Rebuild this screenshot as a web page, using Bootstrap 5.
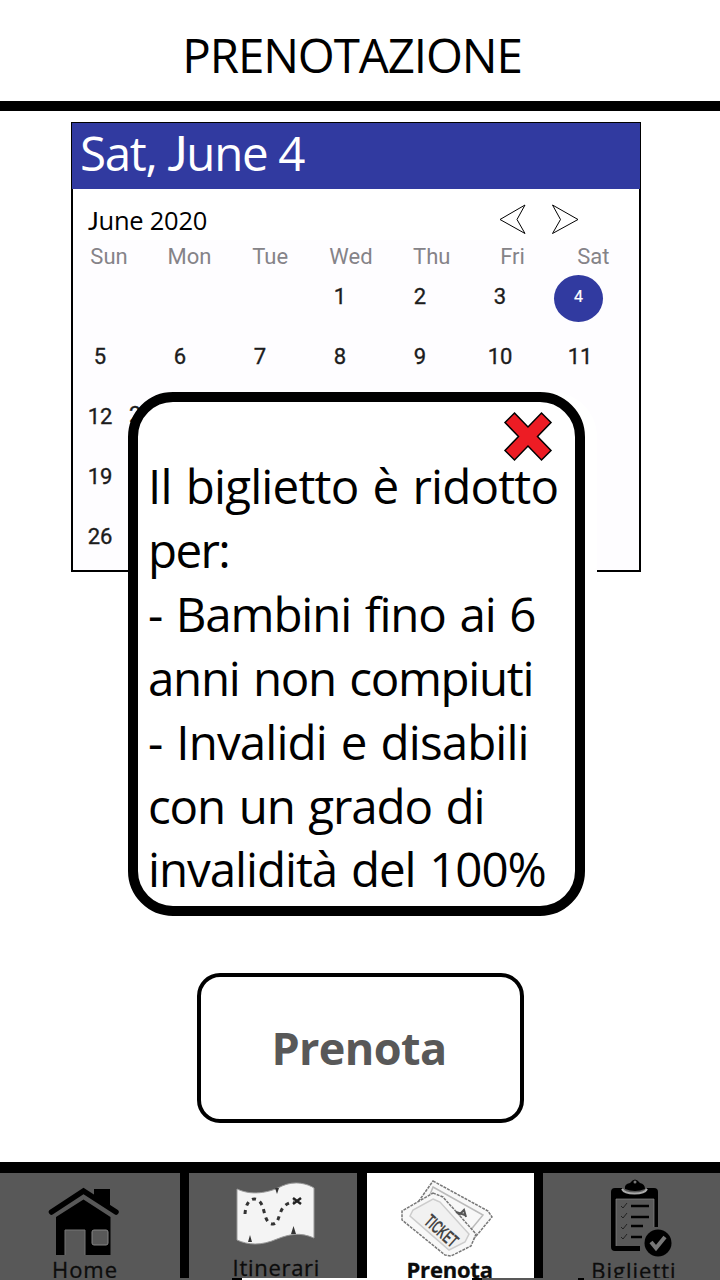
<!DOCTYPE html>
<html lang="it">
<head>
<meta charset="utf-8">
<meta name="viewport" content="width=device-width, initial-scale=1">
<title>Prenotazione</title>
<link rel="stylesheet" href="https://cdn.jsdelivr.net/npm/bootstrap@5.3.0/dist/css/bootstrap.min.css">
<style>
body{font-family:"Open Sans","Noto Sans",sans-serif;color:#000;background:#fff}
.screen{width:720px;height:1280px}
.topbar{height:111px;border-bottom:10px solid #000}
.topbar h1{font-size:47.5px;line-height:64px;letter-spacing:-1.1px;margin:23px 16px 0 0}
.calendar{width:570px;height:450px;margin:11px 0 0 71px;border:2px solid #000;border-top-width:1px;background:#fefdff}
.cal-head{height:66px;margin:0 -1px;padding-left:8px;background:#313aa0;font-size:47.5px;line-height:60px;letter-spacing:-1.3px}
.cap-j{font-family:Lato,sans-serif}
.cal-month{height:51px;padding:0 60px 0 15px;background:#fff}
.month-name{font-size:25.5px;line-height:34px;margin-top:14px;letter-spacing:-.25px}
.dow,.week{display:grid;font-family:Roboto,sans-serif;text-align:center}
.dow{grid-template-columns:76px repeat(6,80.8px);font-size:22px;line-height:33px;height:27px;color:#858388}
.dow span:first-child{width:72px}
.week{grid-template-columns:67px repeat(6,80px);height:60px;line-height:60px;font-size:22px;color:#1c1c1c;-webkit-text-stroke:.35px #1c1c1c}
.week>span:first-child{width:54px}
.today{width:49px;height:47px;border-radius:50%;background:#313aa0;color:#fff;font-size:16px;line-height:43px;margin:8px 0 0 14px;-webkit-text-stroke:.2px #fff}
.hidden-day{left:56px;top:-2px}
.notice{left:128px;top:392px;width:457px;height:524px;border:10px solid #000;border-radius:45px;background:#fff;box-shadow:12px 0 0 #fff;padding:52px 0 0 10px;font-size:47.5px;line-height:63.9px;white-space:nowrap;word-spacing:2.5px}
.notice button{right:21px;top:8px;width:52px;height:52px}
.notice span{display:block;letter-spacing:-1.15px}
.notice .l1{letter-spacing:-.8px}
.notice .l2{letter-spacing:-1.6px}
.notice .l4{letter-spacing:-1.32px}
.notice .l5{letter-spacing:-.88px}
.notice .l7{letter-spacing:-1.05px}
.book{width:327px;height:150px;margin:401px 0 0 197px;border:4px solid #000;border-radius:23px;background:#fff;color:#585858;font-size:45px;font-weight:700;line-height:1;letter-spacing:-.6px;padding:0 3px 1px 0}
.tabs{height:116px;margin-top:39px;background:#000;padding-top:11px;display:grid;grid-template-columns:180px 168px 167px 177px;column-gap:9.33px}
.tab-item{background:#585858;color:#0c0c0c;font-size:22px;line-height:24px;height:105px;overflow:hidden;text-align:center}
.tab-item.current{background:#fff;font-weight:700}
.tab-item svg{display:block;height:84px;width:100%}
.tab-item div{margin-left:-10px;letter-spacing:.9px;-webkit-text-stroke:.3px #0c0c0c}
.tab-item .t-it{margin:-2px 0 0 6px;letter-spacing:.7px}
.tab-item .t-pr{margin-left:-1px;letter-spacing:-.2px}
.tab-item .t-bi{margin:1px 0 0 5px;letter-spacing:1px}
.strip{height:2px;background:linear-gradient(90deg,#585858 232px,#000 232px 242px,#fff 242px 472px,#000 472px 482px,#585858 482px 578px,#000 578px 584px,#585858 584px)}
</style>
</head>
<body>
<main class="screen position-relative overflow-hidden d-flex flex-column">
<header class="topbar text-center flex-shrink-0"><h1 class="fw-normal">PRENOTAZIONE</h1></header>
<section class="calendar flex-shrink-0">
  <div class="cal-head text-white">Sat, <span class="cap-j">J</span>une 4</div>
  <div class="cal-month d-flex justify-content-between">
    <div class="month-name"><span class="cap-j">J</span>une 2020</div>
    <svg width="80" height="30" style="margin-top:15px" fill="#fff" stroke="#000"><path d="M1 15.500L26 1L18 15.500L26 29.500ZM53.500 1L79 15.500L53.500 29.500L61.500 15.500Z"/></svg>
  </div>
  <div class="dow"><span>Sun</span><span>Mon</span><span>Tue</span><span>Wed</span><span>Thu</span><span>Fri</span><span>Sat</span></div>
  <div class="week"><span></span><span></span><span></span><span>1</span><span>2</span><span>3</span><div class="today">4</div></div>
  <div class="week"><span>5</span><span>6</span><span>7</span><span>8</span><span>9</span><span>10</span><span>11</span></div>
  <div class="week"><span class="position-relative">12<span class="hidden-day position-absolute">2</span></span></div>
  <div class="week"><span>19</span></div>
  <div class="week"><span>26</span></div>
</section>
<button class="book flex-shrink-0">Prenota</button>
<nav class="tabs flex-shrink-0">
  <div class="tab-item"><svg viewBox="0 0 180 84"><path d="M51.500 39L83.500 18L116 39" fill="none" stroke="#000" stroke-width="5.500" stroke-linecap="round"/><path d="M94 16H110V35L94 24ZM56 44L83.500 26.500L110.500 44V82H85V57H65V82H56Z"/><path d="M65 82V57H85V82" fill="none" stroke="#777"/><rect x="92" y="57" width="16" height="15" rx="2" fill="#585858" stroke="#858585"/></svg><div>Home</div></div>
  <div class="tab-item"><svg viewBox="0 0 168 84"><path d="M48 16C65 24 84 18 93 13C106 7 119 11 125 15V65C111 59 101 61 88 66C72 73 59 72 48 67Z" fill="#f4f4f4" stroke="#999"/><path d="M56 41C57 24 68 22 73 32C76 39 76 51 84 51C93 50 87 31 105 29" fill="none" stroke="#333" stroke-width="3" stroke-dasharray="4 4.500"/><path d="M104 25L112 31M112 25L104 31" stroke="#222" stroke-width="2.500"/><path d="M86 15H90L88 21ZM59 69L61 62L63 69ZM102 61L104.500 53L107 61Z" fill="#333"/></svg><div class="t-it">Itinerari</div></div>
  <div class="tab-item current"><svg viewBox="0 0 167 84"><g fill="#f8f8f8" stroke="#777" stroke-width="1.500"><path d="M66 8L121 38L125 44L105 68L55 37L49 32Z" stroke-dasharray="3 1"/><path d="M66 14L116 42L102 59L59 32Z" stroke="#bbb"/><path d="M66 20L76 24L109 61L104 73L84 83L78 82L35 47V38Z" stroke-dasharray="3 1"/><path d="M66 26L73 29L102 61L98 69L82 77L43 43L46 37Z" stroke="#ccc" fill="#f1f1f1"/></g><text x="56" y="50" transform="rotate(42 56 50)" font-family="Liberation Sans" font-size="19" font-weight="700" fill="#444" textLength="38" lengthAdjust="spacingAndGlyphs">TICKET</text><path d="M89 39L98 42M92 42L97 37L99 44" fill="none" stroke="#555" stroke-width="2"/></svg><div class="t-pr">Prenota</div></div>
  <div class="tab-item"><svg viewBox="0 0 177 84"><path d="M72 15H79C81 22 102 22 104 15H111Q115 15 115 19V54H111V26H73V73H97V78H72Q68 78 68 74V19Q68 15 72 15Z"/><path d="M82 16Q81 11 87 10Q92 3 97 10Q102 11 102 16Q92 20 82 16Z"/><circle cx="92" cy="9" r="1.500" fill="#777"/><path d="M79 16C82 22 101 22 104 16" fill="none" stroke="#aaa" stroke-width="2"/><path d="M73 73V26H111V54" fill="none" stroke="#888" stroke-width=".7"/><path d="M88 33H106M88 44H106M88 53H100M88 64H99" stroke="#000" stroke-width="2.500"/><path d="M78 33L80 35L84 30M78 43L80 45L84 40M78 54L80 56L84 51M78 64L80 66L84 61" fill="none" stroke="#222"/><circle cx="115" cy="70" r="13.500"/><path d="M108 69L113 75L122 64" fill="none" stroke="#777" stroke-width="4"/></svg><div class="t-bi">Biglietti</div></div>
</nav>
<div class="strip flex-shrink-0"></div>
<aside class="notice position-absolute" role="dialog">
  <button class="btn p-0 border-0 position-absolute d-block" aria-label="Chiudi"><svg class="d-block" width="52" height="52" fill="#ed1c24" stroke="#000" stroke-width="1.500"><path d="M12.500 3L26 17L39.500 3L49 12.500L35.500 26.500L49 40.500L39.500 50L26 36L12.500 50L3 40.500L16.500 26.500L3 12.500Z"/></svg></button>
  <span class="l1">Il biglietto è ridotto</span><span class="l2">per:</span><span>- Bambini fino ai 6</span><span class="l4">anni non compiuti</span><span class="l5">- Invalidi e disabili</span><span>con un grado di</span><span class="l7">invalidità del 100%</span>
</aside>
</main>
<script src="https://cdn.jsdelivr.net/npm/bootstrap@5.3.0/dist/js/bootstrap.bundle.min.js"></script>
</body>
</html>
